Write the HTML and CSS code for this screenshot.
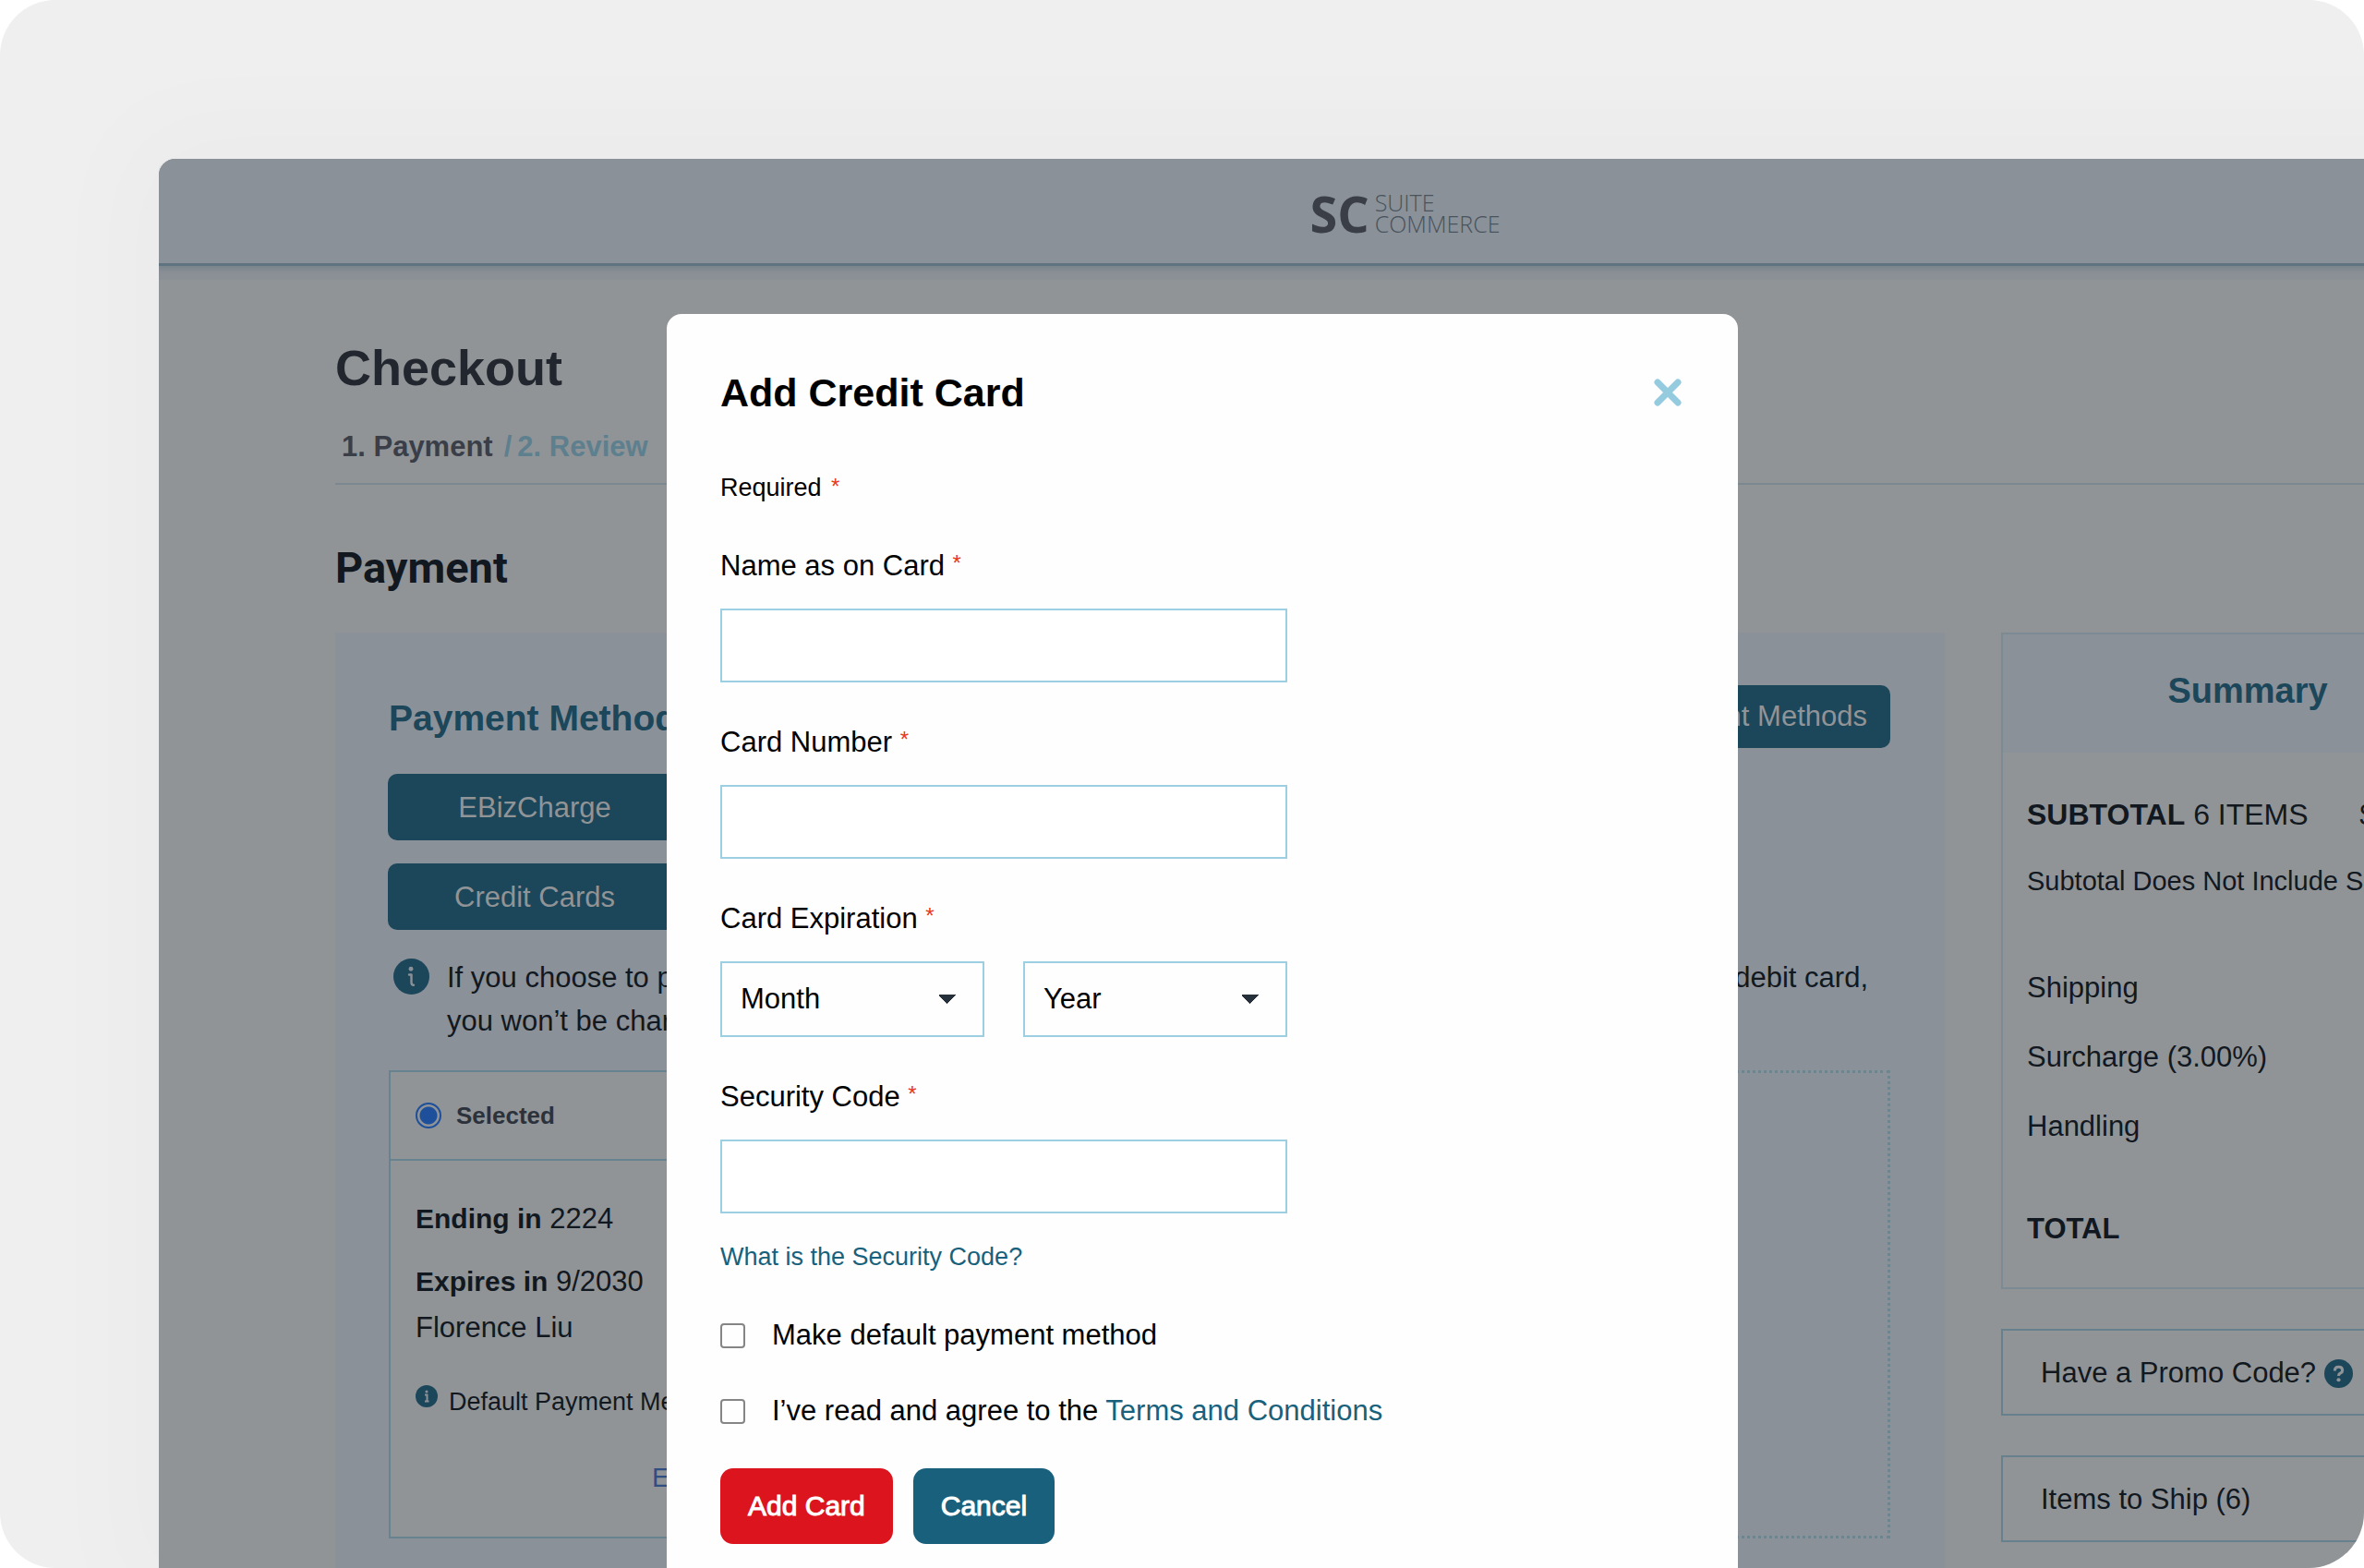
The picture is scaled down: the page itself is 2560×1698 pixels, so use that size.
FILE: index.html
```html
<!DOCTYPE html>
<html lang="en">
<head>
<meta charset="utf-8">
<title>Checkout</title>
<link rel="stylesheet" href="styles.css">
</head>
<body>
<div class="frame">
  <div class="window">
    <header class="topbar">
      <a class="logo" href="#"><span class="logo-mark">SC</span><span class="logo-name">SUITE<br>COMMERCE</span></a>
    </header>
    <main class="checkout">
      <h1 class="title">Checkout</h1>
      <nav class="steps"><span>1. Payment</span><a href="#"><span>/</span><span>2. Review</span></a></nav>
      <h2 class="section">Payment</h2>
      <div class="columns">
        <section class="panel">
          <div class="panel-head">
            <h3 class="panel-title">Payment Methods</h3>
            <button class="btn-teal btn-edit" type="button">Edit Payment Methods</button>
          </div>
          <div class="methods">
            <button class="btn-teal" type="button">EBizCharge</button>
            <button class="btn-teal" type="button">Credit Cards</button>
          </div>
          <div class="notice">
            <svg class="notice-icon" viewBox="0 0 40 40" aria-hidden="true"><circle cx="20" cy="20" r="20" fill="#1c465a"/><circle cx="19.500" cy="11.500" r="2.500" fill="#8a9198"/><path d="M17.500 18h2.500v9q0 2.500 2.500 2.500" fill="none" stroke="#8a9198" stroke-width="2.500" stroke-linecap="round" stroke-linejoin="round"/></svg>
            <div class="notice-text">
              <div class="notice-line"><span>If you choose to pay by credit card, a surcharge is added to the total.</span><span>If you pay by debit card,</span></div>
              <div>you won’t be charged.</div>
            </div>
          </div>
          <div class="cards">
            <article class="card">
              <label class="card-head"><input type="radio" name="card" checked>Selected</label>
              <div class="card-body">
                <p class="card-row"><b>Ending in</b> 2224</p>
                <p class="card-row card-expiry"><b>Expires in</b> 9/2030</p>
                <p class="card-row">Florence Liu</p>
                <p class="card-default"><svg class="small-icon" viewBox="0 0 24 24" aria-hidden="true"><circle cx="12" cy="12" r="12" fill="#1c465a"/><circle cx="12" cy="7" r="1.500" fill="#8a9198"/><path d="M10 10.500h2.500v7M10 17.500h4.500" fill="none" stroke="#8a9198" stroke-width="2"/></svg>Default Payment Method</p>
                <a class="card-edit" href="#">Edit</a>
              </div>
            </article>
            <div class="card-empty"></div>
          </div>
        </section>
        <aside class="side">
          <section class="summary">
            <h3 class="summary-title">Summary</h3>
            <div class="summary-body">
              <p class="summary-row"><span><b>SUBTOTAL</b> 6 ITEMS</span><span>$254.00</span></p>
              <p class="summary-note">Subtotal Does Not Include Shipping</p>
              <div class="fees">
                <p>Shipping</p>
                <p>Surcharge (3.00%)</p>
                <p>Handling</p>
              </div>
              <p><b>TOTAL</b></p>
            </div>
          </section>
          <button class="drawer" type="button">Have a Promo Code?<svg class="help-icon" viewBox="0 0 30 30" aria-hidden="true"><circle cx="15" cy="15" r="15" fill="#1c465a"/><path d="M11 12q0-4 4-4t4 3.500q0 2-2 3t-2 3" fill="none" stroke="#909497" stroke-width="3"/><circle cx="15" cy="21.500" r="2" fill="#909497"/></svg></button>
          <button class="drawer" type="button">Items to Ship (6)</button>
        </aside>
      </div>
    </main>
  </div>

  <form class="modal" role="dialog" aria-labelledby="modal-title">
    <div class="modal-head">
      <h2 class="modal-title" id="modal-title">Add Credit Card</h2>
      <button class="close" type="button" aria-label="Close"><svg viewBox="0 0 30 30" aria-hidden="true"><path d="M4 4L26 26M26 4L4 26" stroke="#95cbdf" stroke-width="7" stroke-linecap="round"/></svg></button>
    </div>
    <p class="required">Required <span class="star star-far">*</span></p>
    <div class="field">
      <label for="name">Name as on Card <span class="star">*</span></label>
      <input class="text" id="name" type="text">
    </div>
    <div class="field">
      <label for="number">Card Number <span class="star">*</span></label>
      <input class="text" id="number" type="text">
    </div>
    <div class="field">
      <label for="month">Card Expiration <span class="star">*</span></label>
      <div class="selects">
        <select id="month"><option>Month</option></select>
        <select aria-label="Year"><option>Year</option></select>
      </div>
    </div>
    <div class="field">
      <label for="code">Security Code <span class="star">*</span></label>
      <input class="text" id="code" type="text">
    </div>
    <a class="hint" href="#">What is the Security Code?</a>
    <div class="check"><input type="checkbox" id="default"><label for="default">Make default payment method</label></div>
    <div class="check"><input type="checkbox" id="terms"><label for="terms">I’ve read and agree to the <a href="#">Terms and Conditions</a></label></div>
    <div class="actions">
      <button class="action action-add" type="submit">Add Card</button>
      <button class="action action-cancel" type="button">Cancel</button>
    </div>
  </form>
</div>
</body>
</html>
```
FILE: styles.css
```css
* { box-sizing: border-box; }
body {
  margin: 0;
  background: #fff;
  font: 31px/40px "Liberation Sans", Arial, sans-serif;
  color: #12181f;
}
h1, h2, h3, p { margin: 0; }
a { color: inherit; text-decoration: none; }
button, input, select { font: inherit; margin: 0; }

.frame {
  position: relative;
  display: flex;
  flex-direction: column;
  min-height: 100vh;
  padding: 172px 0 0 172px;
  overflow: hidden;
  border-radius: 60px;
  background: #efefef;
}

/* Checkout page, dimmed behind the dialog; it runs past the right edge */
.window {
  flex: 1;
  display: flex;
  flex-direction: column;
  margin-right: -311px;
  border-radius: 18px 0 0 0;
  background: #909497;
  box-shadow: 0 0 120px 40px rgba(0, 0, 0, 0.02);
}
.topbar {
  display: flex;
  justify-content: center;
  align-items: center;
  height: 116px;
  padding-top: 4px;
  border-bottom: 3px solid #5f7480;
  border-radius: 18px 0 0 0;
  background: #8a9198;
  box-shadow: 0 4px 4px #7b868c, 0 15px 0 #8b8f96;
  clip-path: inset(0 0 -15px 0);
}
.logo {
  display: flex;
  gap: 6px;
  align-items: center;
  font-family: "Open Sans", "Noto Sans", sans-serif;
}
.logo-mark { font-size: 54px; line-height: 60px; font-weight: 700; color: #393e47; }
.logo-name { font-size: 25px; line-height: 23px; font-weight: 300; color: #48535d; }

.checkout {
  flex: 1;
  display: flex;
  flex-direction: column;
  padding: 78px 170px 0 191px;
}
.title { font-size: 54px; line-height: 64px; color: #22262f; }
.steps {
  display: flex;
  gap: 12px;
  margin-top: 34px;
  padding: 0 7px 19px;
  border-bottom: 2px solid #7b8890;
  font-weight: 700;
  color: #3a3e48;
}
.steps a { display: flex; gap: 6px; color: #5d7f8e; }
.section {
  margin: 60px 0 40px;
  font: 700 47px/60px Roboto, sans-serif;
}
.columns {
  flex: 1;
  display: grid;
  grid-template-columns: 1fr 534px;
  gap: 61px;
}

.panel { padding: 57px 59px 0 57px; background: #8a9198; }
.panel-head { display: flex; justify-content: space-between; align-items: flex-start; }
.panel-title { padding: 12px 0 0 1px; font-size: 39px; line-height: 48px; color: #1c465a; }
.btn-teal {
  width: 318px;
  height: 72px;
  padding: 2px 0 0;
  border: 0;
  border-radius: 10px;
  background: #1c465a;
  color: #909497;
}
.btn-edit { width: auto; height: 68px; padding: 0 25px; }
.methods {
  display: flex;
  flex-direction: column;
  gap: 25px;
  margin-top: 28px;
}
.notice { display: flex; gap: 19px; margin-top: 28px; padding: 0 24px 0 6px; }
.notice-icon { flex: none; width: 39px; height: 39px; margin-top: 3px; }
.notice-text { flex: 1; line-height: 47px; }
.notice-line { display: flex; justify-content: space-between; white-space: nowrap; }
.cards {
  display: grid;
  grid-template-columns: 1fr 1fr;
  gap: 30px;
  height: 507px;
  margin: 30px 0 0 1px;
}
.card { border: 2px solid #67838f; background: #909497; }
.card-head {
  display: flex;
  align-items: center;
  gap: 16px;
  height: 96px;
  padding-left: 27px;
  border-bottom: 2px solid #67838f;
  font-size: 26px;
  font-weight: 700;
  color: #2c323c;
}
.card-head input {
  appearance: none;
  width: 28px;
  height: 28px;
  border: 2px solid #1d4f9b;
  border-radius: 50%;
  background: radial-gradient(circle, #1d4f9b 9px, transparent 10px);
}
.card-body { padding: 38px 27px 0; }
.card-row { line-height: 50px; }
.card-row b { font-size: 30px; }
.card-expiry { margin-top: 18px; }
.card-default {
  display: flex;
  gap: 12px;
  margin-top: 35px;
  font-size: 27px;
}
.small-icon { width: 24px; height: 24px; margin-top: 2px; }
.card-edit { display: block; margin: 42px 0 0 256px; font-size: 29px; color: #2f4f83; }
.card-empty { border: 3px dotted #6c858f; }

.side { display: flex; flex-direction: column; gap: 43px; }
.summary { border: 2px solid #7b8a93; }
.summary-title {
  padding: 37px 0 43px;
  background: #8a9198;
  font-size: 38px;
  line-height: 48px;
  text-align: center;
  color: #1c465a;
}
.summary-body { padding: 47px 28px 43px 26px; }
.summary-row { display: flex; justify-content: space-between; font-size: 32px; }
.summary-note { margin-top: 32px; font-size: 29px; white-space: nowrap; }
.fees { display: grid; gap: 35px; margin: 76px 0 71px; }
.drawer {
  display: flex;
  align-items: center;
  gap: 9px;
  height: 94px;
  padding: 2px 41px 0;
  border: 2px solid #66808d;
  background: transparent;
  color: inherit;
}
.help-icon { width: 31px; height: 31px; }

/* Dialog laid over the page */
.modal {
  position: absolute;
  top: 340px;
  right: 678px;
  bottom: 0;
  left: 722px;
  padding: 60px 58px 0;
  border-radius: 16px 16px 0 0;
  background: #fefefe;
  color: #000;
}
.modal a { color: #18617c; }
.modal-head { display: flex; justify-content: space-between; }
.modal-title { font-size: 43px; line-height: 50px; }
.close { width: 30px; height: 30px; margin: 10px 3px; padding: 0; border: 0; background: none; }
.close svg { display: block; }
.required { margin-top: 58px; font-size: 27px; }
.star { color: #e8391d; font-size: 24px; line-height: 20px; vertical-align: 5px; }
.star-far { margin-left: 3px; vertical-align: 2px; }
.field { width: 614px; margin-bottom: 45px; }
.field label { display: block; margin-bottom: 26px; }
.required + .field { margin-top: 45px; }
.text {
  display: block;
  width: 100%;
  height: 80px;
  padding: 0 20px;
  border: 2px solid #9ccfe1;
  background: #fff;
}
.selects { display: grid; grid-template-columns: 1fr 1fr; gap: 42px; }
select {
  appearance: none;
  height: 82px;
  padding: 0 20px;
  border: 2px solid #9ccfe1;
  border-radius: 0;
  background: conic-gradient(from -45deg at 50% 100%, #25303a 90deg, transparent 0) right 29px center / 18px 10px no-repeat;
  color: #000;
}
.hint { display: block; margin: -18px 0 45px; font-size: 27px; }
.check { display: flex; align-items: center; gap: 29px; margin-bottom: 42px; }
.check input {
  appearance: none;
  width: 27px;
  height: 27px;
  border: 2px solid #858585;
  border-radius: 4px;
}
.actions { display: flex; gap: 22px; }
.action {
  height: 82px;
  padding: 0 30px;
  border: 0;
  border-radius: 14px;
  color: #fff;
  font-size: 30px;
  -webkit-text-stroke: 1px;
}
.action-add { background: #db141e; }
.action-cancel { background: #18607b; }
```
